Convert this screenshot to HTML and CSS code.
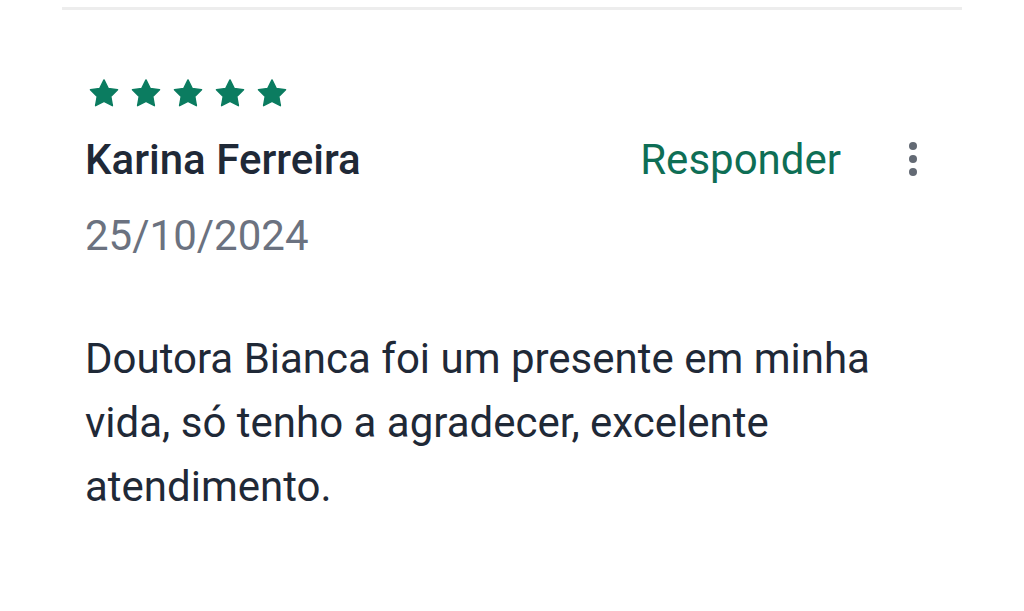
FILE: index.html
```html
<!DOCTYPE html>
<html lang="pt-BR">
<head>
<meta charset="utf-8">
<title>Avaliação</title>
<link rel="stylesheet" href="styles.css">
</head>
<body>
<div class="page">
  <article class="review">
    <div class="stars" aria-label="5 estrelas">
      <svg class="star" viewBox="-0.5 -0.5 25 24"><path d="M12 0.6l3.5 7.1 7.8 1.1-5.65 5.5 1.35 7.8L12 18.4l-7 3.7 1.35-7.8L.7 8.8l7.8-1.1z" stroke-linejoin="round" stroke-width="1.2"/></svg>
      <svg class="star" viewBox="-0.5 -0.5 25 24"><path d="M12 0.6l3.5 7.1 7.8 1.1-5.65 5.5 1.35 7.8L12 18.4l-7 3.7 1.35-7.8L.7 8.8l7.8-1.1z" stroke-linejoin="round" stroke-width="1.2"/></svg>
      <svg class="star" viewBox="-0.5 -0.5 25 24"><path d="M12 0.6l3.5 7.1 7.8 1.1-5.65 5.5 1.35 7.8L12 18.4l-7 3.7 1.35-7.8L.7 8.8l7.8-1.1z" stroke-linejoin="round" stroke-width="1.2"/></svg>
      <svg class="star" viewBox="-0.5 -0.5 25 24"><path d="M12 0.6l3.5 7.1 7.8 1.1-5.65 5.5 1.35 7.8L12 18.4l-7 3.7 1.35-7.8L.7 8.8l7.8-1.1z" stroke-linejoin="round" stroke-width="1.2"/></svg>
      <svg class="star" viewBox="-0.5 -0.5 25 24"><path d="M12 0.6l3.5 7.1 7.8 1.1-5.65 5.5 1.35 7.8L12 18.4l-7 3.7 1.35-7.8L.7 8.8l7.8-1.1z" stroke-linejoin="round" stroke-width="1.2"/></svg>
    </div>
    <div class="head">
      <h3 class="name">Karina Ferreira</h3>
      <div class="actions">
        <a class="reply" href="#">Responder</a>
        <svg class="more" viewBox="0 0 10 36"><circle cx="5" cy="5" r="4"/><circle cx="5" cy="18" r="4"/><circle cx="5" cy="31" r="4"/></svg>
      </div>
    </div>
    <p class="date">25/10/2024</p>
    <p class="text">Doutora Bianca foi um presente em minha vida, só tenho a agradecer, excelente atendimento.</p>
  </article>
</div>
</body>
</html>
```
FILE: styles.css
```css
html, body {
  margin: 0;
  background: #fff;
}
body {
  font-family: Roboto, "Noto Sans", sans-serif;
}
.page {
  padding: 7px 62px 0;
}
.review {
  border-top: 3px solid #ededed;
  padding: 68px 44px 0 23px;
}
.stars {
  display: flex;
  gap: 12px;
  height: 30px;
  padding-left: 4px;
}
.star {
  width: 30px;
  height: 30px;
  fill: #0b7c60;
  stroke: #0b7c60;
}
.head {
  display: flex;
  align-items: center;
  justify-content: space-between;
  margin-top: 28px;
}
.name {
  margin: 0;
  font-size: 42px;
  font-weight: 500;
  line-height: 48px;
  color: #1f2937;
}
.actions {
  display: flex;
  align-items: center;
  gap: 67px;
}
.reply {
  font-size: 42px;
  line-height: 48px;
  color: #0e6e55;
  text-decoration: none;
}
.more {
  width: 10px;
  height: 36px;
  margin-top: -3px;
  fill: #636a74;
}
.date {
  margin: 28px 0 0;
  font-size: 42px;
  line-height: 48px;
  color: #6b7280;
}
.text {
  margin: 67px 0 0;
  font-size: 42px;
  line-height: 64px;
  color: #1f2937;
  max-width: 820px;
}
```
